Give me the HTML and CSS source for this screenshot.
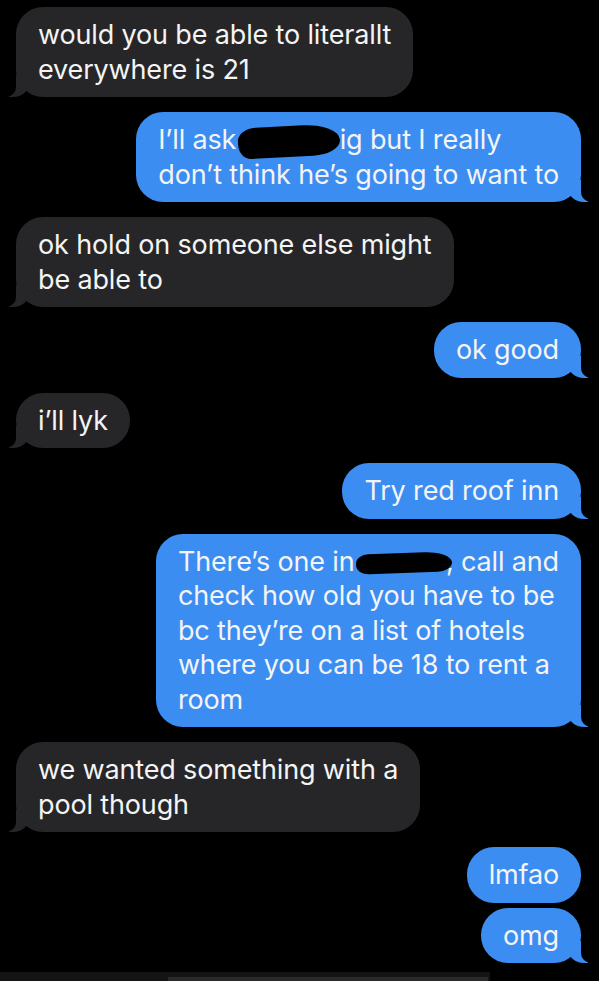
FILE: index.html
```html
<!DOCTYPE html>
<html>
<head>
<meta charset="utf-8">
<link rel="stylesheet" href="styles.css">
</head>
<body>
<div class="chat">
  <div class="row in"><div class="bubble gray">would you be able to literallt<br>everywhere is 21</div></div>
  <div class="row out"><div class="bubble blue">I’ll ask <span class="redact r1"></span>ig but I really<br>don’t think he’s going to want to</div></div>
  <div class="row in"><div class="bubble gray">ok hold on someone else might<br>be able to</div></div>
  <div class="row out"><div class="bubble blue">ok good</div></div>
  <div class="row in"><div class="bubble gray">i’ll lyk</div></div>
  <div class="row out"><div class="bubble blue">Try red roof inn</div></div>
  <div class="row out"><div class="bubble blue">There’s one in <span class="redact r2"></span>, call and<br>check how old you have to be<br>bc they’re on a list of hotels<br>where you can be 18 to rent a<br>room</div></div>
  <div class="row in"><div class="bubble gray">we wanted something with a<br>pool though</div></div>
  <div class="row out tight"><div class="bubble blue notail">lmfao</div></div>
  <div class="row out"><div class="bubble blue">omg</div></div>
</div>
<div class="bottom"><div class="bar"></div></div>
</body>
</html>
```

FILE: styles.css
```css
html, body {
  margin: 0;
  padding: 0;
  background: #000;
}
body {
  width: 599px;
  height: 981px;
  overflow: hidden;
  font-family: "Inter", "Liberation Sans", sans-serif;
  position: relative;
}
.chat {
  display: flex;
  flex-direction: column;
  gap: 15px;
  padding: 7px 18px 0 16px;
}
.row {
  display: flex;
}
.row.in { justify-content: flex-start; }
.row.out { justify-content: flex-end; }
.row.tight { margin-bottom: -10px; }
.bubble {
  position: relative;
  white-space: nowrap;
  font-size: 27px;
  line-height: 34.5px;
  color: #f4f4f4;
  padding: 11px 22px 10px 22px;
  border-radius: 27px;
  letter-spacing: -0.15px;
}
.gray { background: #262628; }
.blue { background: #3b8df2; }

.gray::before {
  content: "";
  position: absolute;
  bottom: 0;
  left: -7px;
  width: 20px;
  height: 22px;
  background: #262628;
  border-bottom-right-radius: 16px 14px;
}
.gray::after {
  content: "";
  position: absolute;
  bottom: 0;
  left: -26px;
  width: 26px;
  height: 22px;
  background: #000;
  border-bottom-right-radius: 10px;
}
.blue::before {
  content: "";
  position: absolute;
  bottom: 0;
  right: -7px;
  width: 20px;
  height: 22px;
  background: #3b8df2;
  border-bottom-left-radius: 16px 14px;
}
.blue::after {
  content: "";
  position: absolute;
  bottom: 0;
  right: -26px;
  width: 26px;
  height: 22px;
  background: #000;
  border-bottom-left-radius: 10px;
}
.notail::before, .notail::after { display: none; }

.redact {
  display: inline-block;
  background: #000;
  vertical-align: middle;
}
.r1 {
  width: 102px;
  height: 31px;
  margin-left: -6px;
  border-radius: 20px 40px 30px 14px / 14px 18px 16px 16px;
  transform: rotate(-3deg);
}
.r2 {
  width: 96px;
  height: 20px;
  margin-left: -6px;
  margin-right: -6px;
  border-radius: 14px 30px 16px 14px / 10px 12px 10px 10px;
  transform: rotate(-2deg);
}
.bottom {
  position: absolute;
  left: 0;
  right: 0;
  bottom: 0;
  height: 9px;
  display: flex;
  align-items: flex-end;
}
.bottom::before {
  content: "";
  position: absolute;
  left: 0;
  top: 0;
  width: 490px;
  height: 9px;
  background: #141414;
}
.bar {
  position: relative;
  margin-left: 168px;
  width: 320px;
  height: 4px;
  background: #2a2a2a;
}
```
